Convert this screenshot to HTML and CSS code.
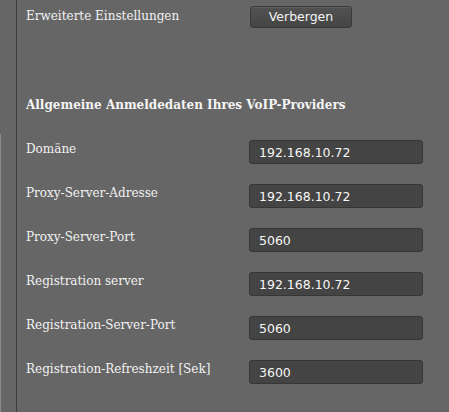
FILE: index.html
```html
<!DOCTYPE html>
<html lang="de">
<head>
<meta charset="utf-8">
<title>VoIP</title>
<link rel="stylesheet" href="styles.css">
</head>
<body>
<div class="page">
  <div class="side"><div class="side-strip"></div></div>
  <div class="content">
    <div class="top-row">
      <span class="label">Erweiterte Einstellungen</span>
      <button class="btn" type="button">Verbergen</button>
    </div>
    <h2 class="heading">Allgemeine Anmeldedaten Ihres VoIP-Providers</h2>
    <div class="form">
      <div class="row"><label class="label">Domäne</label><input class="field" value="192.168.10.72"></div>
      <div class="row"><label class="label">Proxy-Server-Adresse</label><input class="field" value="192.168.10.72"></div>
      <div class="row"><label class="label">Proxy-Server-Port</label><input class="field" value="5060"></div>
      <div class="row"><label class="label">Registration server</label><input class="field" value="192.168.10.72"></div>
      <div class="row"><label class="label">Registration-Server-Port</label><input class="field" value="5060"></div>
      <div class="row"><label class="label">Registration-Refreshzeit [Sek]</label><input class="field" value="3600"></div>
    </div>
  </div>
</div>
</body>
</html>
```
FILE: styles.css
```css
html, body {
  margin: 0;
  padding: 0;
  background: #666666;
  height: 412px;
  overflow: hidden;
}
.page {
  display: flex;
  height: 412px;
}
.side {
  width: 16px;
  flex: none;
}
.side-strip {
  width: 1px;
  margin-top: 134px;
  height: 278px;
  background: #8a8a8a;
}
.content {
  flex: 1;
  border-left: 1px solid #3e3e3e;
  padding-left: 9px;
}
.label {
  font-family: "DejaVu Serif", serif;
  font-size: 12px;
  line-height: 15px;
  color: #f2f2f2;
}
.top-row {
  display: grid;
  grid-template-columns: 224px auto;
  align-items: start;
  padding-top: 6px;
}
.top-row .label {
  padding-top: 3px;
}
.btn {
  justify-self: start;
  width: 102px;
  height: 22px;
  padding: 0;
  border: 1px solid #3a3a3a;
  border-radius: 3px;
  background: linear-gradient(#525252, #454545);
  box-shadow: inset 0 1px 0 rgba(255,255,255,0.08);
  color: #f4f4f4;
  font-family: "DejaVu Sans", sans-serif;
  font-size: 12.5px;
  line-height: 20px;
}
.heading {
  margin: 0;
  padding-top: 70px;
  font-family: "DejaVu Serif", serif;
  font-weight: bold;
  font-size: 12px;
  line-height: 15px;
  color: #f4f4f4;
}
.form {
  padding-top: 27px;
  display: flex;
  flex-direction: column;
  gap: 20px;
}
.row {
  display: grid;
  grid-template-columns: 223px 174px;
  align-items: start;
}
.row .label {
  padding-top: 2px;
}
.field {
  box-sizing: border-box;
  width: 174px;
  height: 24px;
  margin: 0;
  padding: 0 0 0 9px;
  border: 1px solid #363636;
  border-radius: 3px;
  background: #444444;
  color: #f6f6f6;
  font-family: "DejaVu Sans", sans-serif;
  font-size: 12.5px;
  outline: none;
}
```
